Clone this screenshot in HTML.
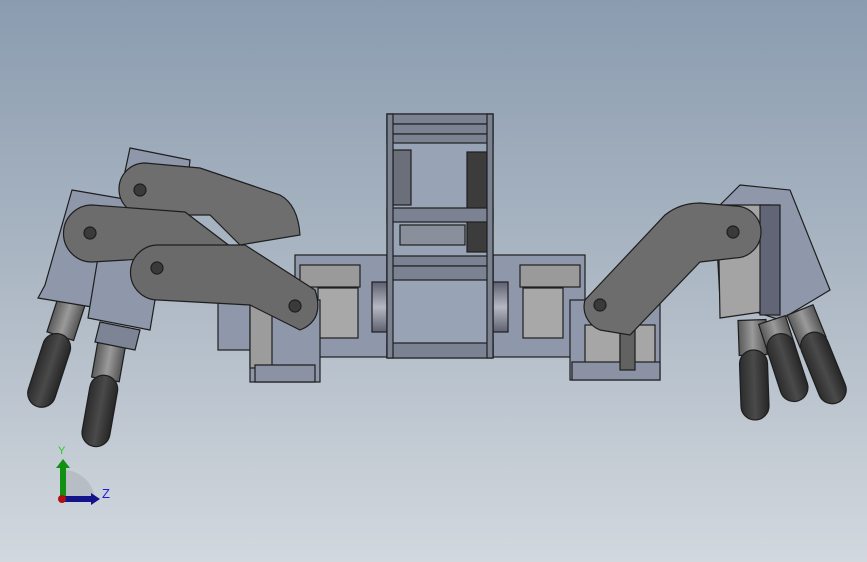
<!DOCTYPE html>
<html><head><meta charset="utf-8"><style>
html,body{margin:0;padding:0;width:867px;height:562px;overflow:hidden}
body{background:linear-gradient(#8b9cb0 0%,#a9b5c2 45%,#d2d8de 100%);font-family:"Liberation Sans",sans-serif}
svg{position:absolute;left:0;top:0}
</style></head><body>
<svg width="867" height="562" viewBox="0 0 867 562" xmlns="http://www.w3.org/2000/svg">
<defs>
<linearGradient id="cyl" x1="0" x2="1" y1="0" y2="0"><stop offset="0" stop-color="#5a5a5a"/><stop offset=".5" stop-color="#9a9a9a"/><stop offset="1" stop-color="#555"/></linearGradient>
<linearGradient id="blk" x1="0" x2="1"><stop offset="0" stop-color="#2c2c2c"/><stop offset=".5" stop-color="#4a4a4a"/><stop offset="1" stop-color="#262626"/></linearGradient>
<linearGradient id="hub" x1="0" x2="0" y1="0" y2="1"><stop offset="0" stop-color="#5d6170"/><stop offset=".5" stop-color="#b5b8c2"/><stop offset="1" stop-color="#5d6170"/></linearGradient>
</defs>
<g stroke="#1e1e1e" stroke-width="1.2">
<rect x="295" y="255" width="92" height="102" fill="#8f98aa"/>
<rect x="493" y="255" width="92" height="102" fill="#8f98aa"/>
<rect x="372" y="282" width="15" height="50" fill="url(#hub)"/>
<rect x="493" y="282" width="15" height="50" fill="url(#hub)"/>
<rect x="300" y="265" width="60" height="22" fill="#9a9a9a"/>
<rect x="318" y="288" width="40" height="50" fill="#a8a8a8"/>
<rect x="520" y="265" width="60" height="22" fill="#9a9a9a"/>
<rect x="523" y="288" width="40" height="50" fill="#a8a8a8"/>
<rect x="387" y="114" width="106" height="244" fill="#98a4b6"/>
<rect x="393" y="150" width="18" height="55" fill="#6a6f7a"/>
<rect x="467" y="152" width="20" height="100" fill="#3c3c3c"/>
<rect x="400" y="225" width="65" height="20" fill="#8a8f9c"/>
<g fill="#7b8292">
<rect x="387" y="114" width="106" height="10"/><rect x="387" y="124" width="106" height="10"/><rect x="387" y="134" width="106" height="9"/>
<rect x="387" y="208" width="106" height="14"/>
<rect x="387" y="256" width="106" height="10"/><rect x="387" y="266" width="106" height="14"/>
<rect x="387" y="343" width="106" height="15"/>
</g>
<rect x="387" y="114" width="6" height="244" fill="#7b8292"/>
<rect x="487" y="114" width="6" height="244" fill="#7b8292"/>

<rect x="218" y="285" width="35" height="65" fill="#8f98aa"/>
<rect x="250" y="300" width="70" height="82" fill="#8f98aa"/>
<rect x="250" y="300" width="22" height="68" fill="#9c9c9c"/>
<g transform="rotate(18 72 300)"><rect x="58" y="300" width="28" height="38" fill="url(#cyl)"/><rect x="58" y="336" width="28" height="76" rx="14" fill="url(#blk)"/></g>
<g transform="rotate(10 112 342)"><rect x="98" y="342" width="28" height="38" fill="url(#cyl)"/><rect x="98" y="376" width="28" height="72" rx="14" fill="url(#blk)"/></g>
<polygon points="130,148 190,160 185,205 120,195" fill="#8f98aa"/>
<polygon points="72,190 130,200 110,310 38,298 45,285" fill="#8f98aa"/>
<polygon points="100,245 162,258 150,330 88,318" fill="#8f98aa"/>
<polygon points="100,322 140,330 135,350 95,342" fill="#7c8496"/>
<path d="M145,163 L200,168 L280,195 Q298,205 300,235 L240,245 L210,215 L145,215 A26,26 0 0 1 145,163 Z" fill="#6e6e6e"/>
<path d="M92,205 L185,212 L235,250 L225,275 L160,258 L92,262 A28,28 0 0 1 92,205 Z" fill="#6c6c6c"/>
<path d="M158,245 L245,245 L315,290 Q325,320 300,330 L250,305 L158,300 A27,27 0 0 1 158,245 Z" fill="#6a6a6a"/>
<g fill="#3a3a3a"><circle cx="140" cy="190" r="6"/><circle cx="90" cy="233" r="6"/><circle cx="157" cy="268" r="6"/><circle cx="295" cy="306" r="6"/></g>
<polygon points="255,365 315,365 315,382 255,382" fill="#8a92a4"/>

<rect x="570" y="300" width="90" height="80" fill="#8f98aa"/>
<rect x="585" y="325" width="35" height="40" fill="#a6a6a6"/>
<rect x="625" y="325" width="30" height="40" fill="#a6a6a6"/>
<rect x="572" y="362" width="88" height="18" fill="#8a92a4"/>
<rect x="620" y="300" width="15" height="70" fill="#626262"/>
<polygon points="740,185 790,190 830,290 780,320 720,300 715,210" fill="#8f98aa"/>
<polygon points="718,205 770,205 775,310 720,318" fill="#a4a4a4"/>
<rect x="760" y="205" width="20" height="110" fill="#616575"/>
<g transform="rotate(-2 752 320)"><rect x="738" y="320" width="28" height="35" fill="url(#cyl)"/><rect x="738" y="350" width="28" height="70" rx="14" fill="url(#blk)"/></g>
<g transform="rotate(-18 772 320)"><rect x="758" y="320" width="28" height="30" fill="url(#cyl)"/><rect x="758" y="335" width="28" height="70" rx="14" fill="url(#blk)"/></g>
<g transform="rotate(-22 800 310)"><rect x="786" y="310" width="28" height="35" fill="url(#cyl)"/><rect x="786" y="335" width="28" height="75" rx="14" fill="url(#blk)"/></g>
<path d="M585,300 L665,215 Q680,203 700,203 L735,206 A26,26 0 0 1 735,258 L700,262 L630,335 L600,330 A25,25 0 0 1 585,300 Z" fill="#6d6d6d"/>
<circle cx="733" cy="232" r="6" fill="#3a3a3a"/>
<circle cx="600" cy="305" r="6" fill="#3a3a3a"/>
</g>
<path d="M63,470 L63,500 L95,500 A32,32 0 0 0 63,470 Z" fill="#b3b8c0" opacity=".8"/>
<rect x="60" y="466" width="6" height="34" fill="#129012"/>
<polygon points="56,468 63,459 70,468" fill="#129012"/>
<rect x="63" y="496" width="29" height="6" fill="#14148a"/>
<polygon points="91,493 100,499 91,505" fill="#14148a"/>
<circle cx="62" cy="499" r="4" fill="#b01010"/>
<text x="58" y="454" font-size="11" fill="#22cc22">Y</text>
<text x="102" y="498" font-size="13" fill="#1a1ae0">Z</text>
</svg>
</body></html>
